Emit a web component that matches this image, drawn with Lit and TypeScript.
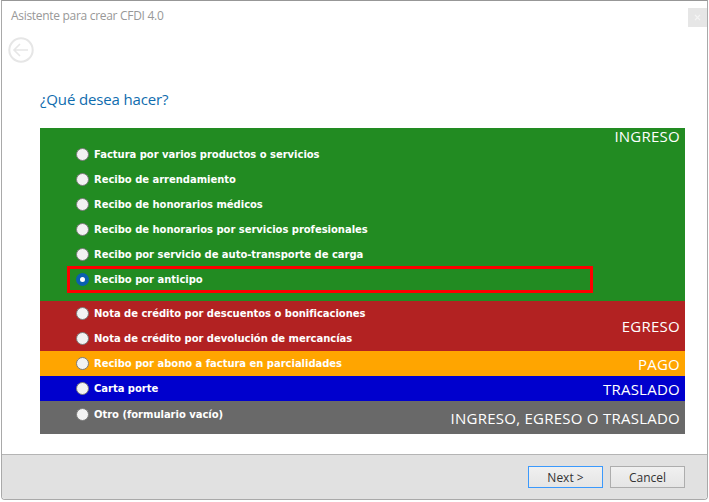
import { LitElement, html, css } from "lit";
import { customElement } from "lit/decorators.js";

type Band = { cls: string; label: string; opts: string[] };
const bands: Band[] = [
  { cls: "green", label: "INGRESO", opts: ["Factura por varios productos o servicios", "Recibo de arrendamiento", "Recibo de honorarios médicos", "Recibo de honorarios por servicios profesionales", "Recibo por servicio de auto-transporte de carga", "Recibo por anticipo"] },
  { cls: "red", label: "EGRESO", opts: ["Nota de crédito por descuentos o bonificaciones", "Nota de crédito por devolución de mercancías"] },
  { cls: "orange", label: "PAGO", opts: ["Recibo por abono a factura en parcialidades"] },
  { cls: "blue", label: "TRASLADO", opts: ["Carta porte"] },
  { cls: "gray", label: "INGRESO, EGRESO O TRASLADO", opts: ["Otro (formulario vacío)"] },
];

@customElement("app-root")
export class AppRoot extends LitElement {
  static styles = css`
    :host { display: block; width: 709px; height: 502px; background: #fff; font-family: "Open Sans", "Noto Sans", sans-serif; overflow: hidden; }
    .win { box-sizing: border-box; width: 707px; height: 500px; margin-left: 1px; display: flex; flex-direction: column; border: 1px solid #a9a9a9; border-top-color: #979797; border-radius: 0 0 4px 4px; background: #fff; }
    .title { height: 49px; flex: none; box-sizing: border-box; padding: 7px 0 0 9px; display: flex; justify-content: space-between; align-items: flex-start; }
    .title span { font-size: 12px; line-height: 16px; color: #989898; letter-spacing: -0.3px; }
    .close { width: 19px; height: 19px; background: #e6e6e6; display: flex; align-items: center; justify-content: center; }
    .back { display: block; flex: none; margin: -13px 0 0 6px; }
    .content { flex: 1; padding: 0 22px 0 38px; min-height: 0; }
    h1 { margin: 26px 0 0; font-weight: 400; font-size: 15px; line-height: 20px; color: #0f6cae; height: 39px; letter-spacing: -0.15px; }
    .band { display: flex; justify-content: space-between; color: #fff; }
    .green { background: #228b22; height: 173px; padding-top: 14px; box-sizing: border-box; }
    .red { background: #b22222; height: 50px; box-sizing: border-box; }
    .orange { background: #ffa500; height: 25px; box-sizing: border-box; }
    .blue { background: #0000cd; height: 25px; box-sizing: border-box; }
    .gray { background: #696969; height: 33px; box-sizing: border-box; }
    .opts { display: flex; flex-direction: column; padding-left: 36px; }
    .opt { height: 25px; display: flex; align-items: center; gap: 5px; font-family: "DejaVu Sans", sans-serif; font-weight: 700; font-size: 10px; letter-spacing: -0.03px; white-space: nowrap; }
    .gray .opt { height: 27px; }
    .radio { width: 11px; height: 11px; border-radius: 50%; background: #f2f2f2; border: 1px solid #7a7a7a; flex: none; }
    .radio.on { background: #fff; border: 4px solid #0a5fb0; width: 5px; height: 5px; }
    .sel { position: relative; }
    .sel::after { content: ""; position: absolute; left: -9px; top: -1px; width: 526px; height: 27px; border: 3px solid #f00; box-sizing: border-box; pointer-events: none; }
    .label { font-size: 15px; line-height: 18px; padding-right: 5px; white-space: nowrap; letter-spacing: 0.25px; }
    .green .label { margin-top: -15px; }
    .center { align-self: center; }
    .foot { flex: none; height: 45px; box-sizing: border-box; border-top: 1px solid #b4b4b4; background: #e1e1e1; border-radius: 0 0 4px 4px; display: flex; justify-content: flex-end; align-items: center; gap: 7px; padding-right: 22px; }
    button { width: 75px; height: 22px; padding: 0; box-sizing: border-box; border: 1px solid #adadad; background: linear-gradient(#f0f0f0, #e5e5e5); font-family: "Open Sans", sans-serif; font-size: 12px; color: #333; }
    button.def { border-color: #3b99fc; }
  `;
  render() {
    return html`<div class="win">
      <div class="title"><span>Asistente para crear CFDI 4.0</span>
        <div class="close"><svg width="7" height="7" viewBox="0 0 7 7"><path d="M1 1l5 5M6 1L1 6" stroke="#f4f4f4" stroke-width="1.2"/></svg></div></div>
      <svg class="back" width="26" height="26" viewBox="0 0 26 26" fill="none" stroke="#e6e6e6"><circle cx="13" cy="13" r="11.7" stroke-width="2"/><path d="M20 13H6M12 7l-6 6 6 6" stroke-width="1.6"/></svg>
      <div class="content">
        <h1>¿Qué desea hacer?</h1>
        ${bands.map((b) => html`<div class="band ${b.cls}">
          <div class="opts">${b.opts.map((o) => {
            const on = o === "Recibo por anticipo";
            return html`<div class="opt ${on ? "sel" : ""}"><span class="radio ${on ? "on" : ""}"></span>${o}</div>`;
          })}</div>
          <div class="label ${b.cls === "green" ? "" : "center"}">${b.label}</div>
        </div>`)}
      </div>
      <div class="foot"><button class="def">Next &gt;</button><button>Cancel</button></div>
    </div>`;
  }
}
